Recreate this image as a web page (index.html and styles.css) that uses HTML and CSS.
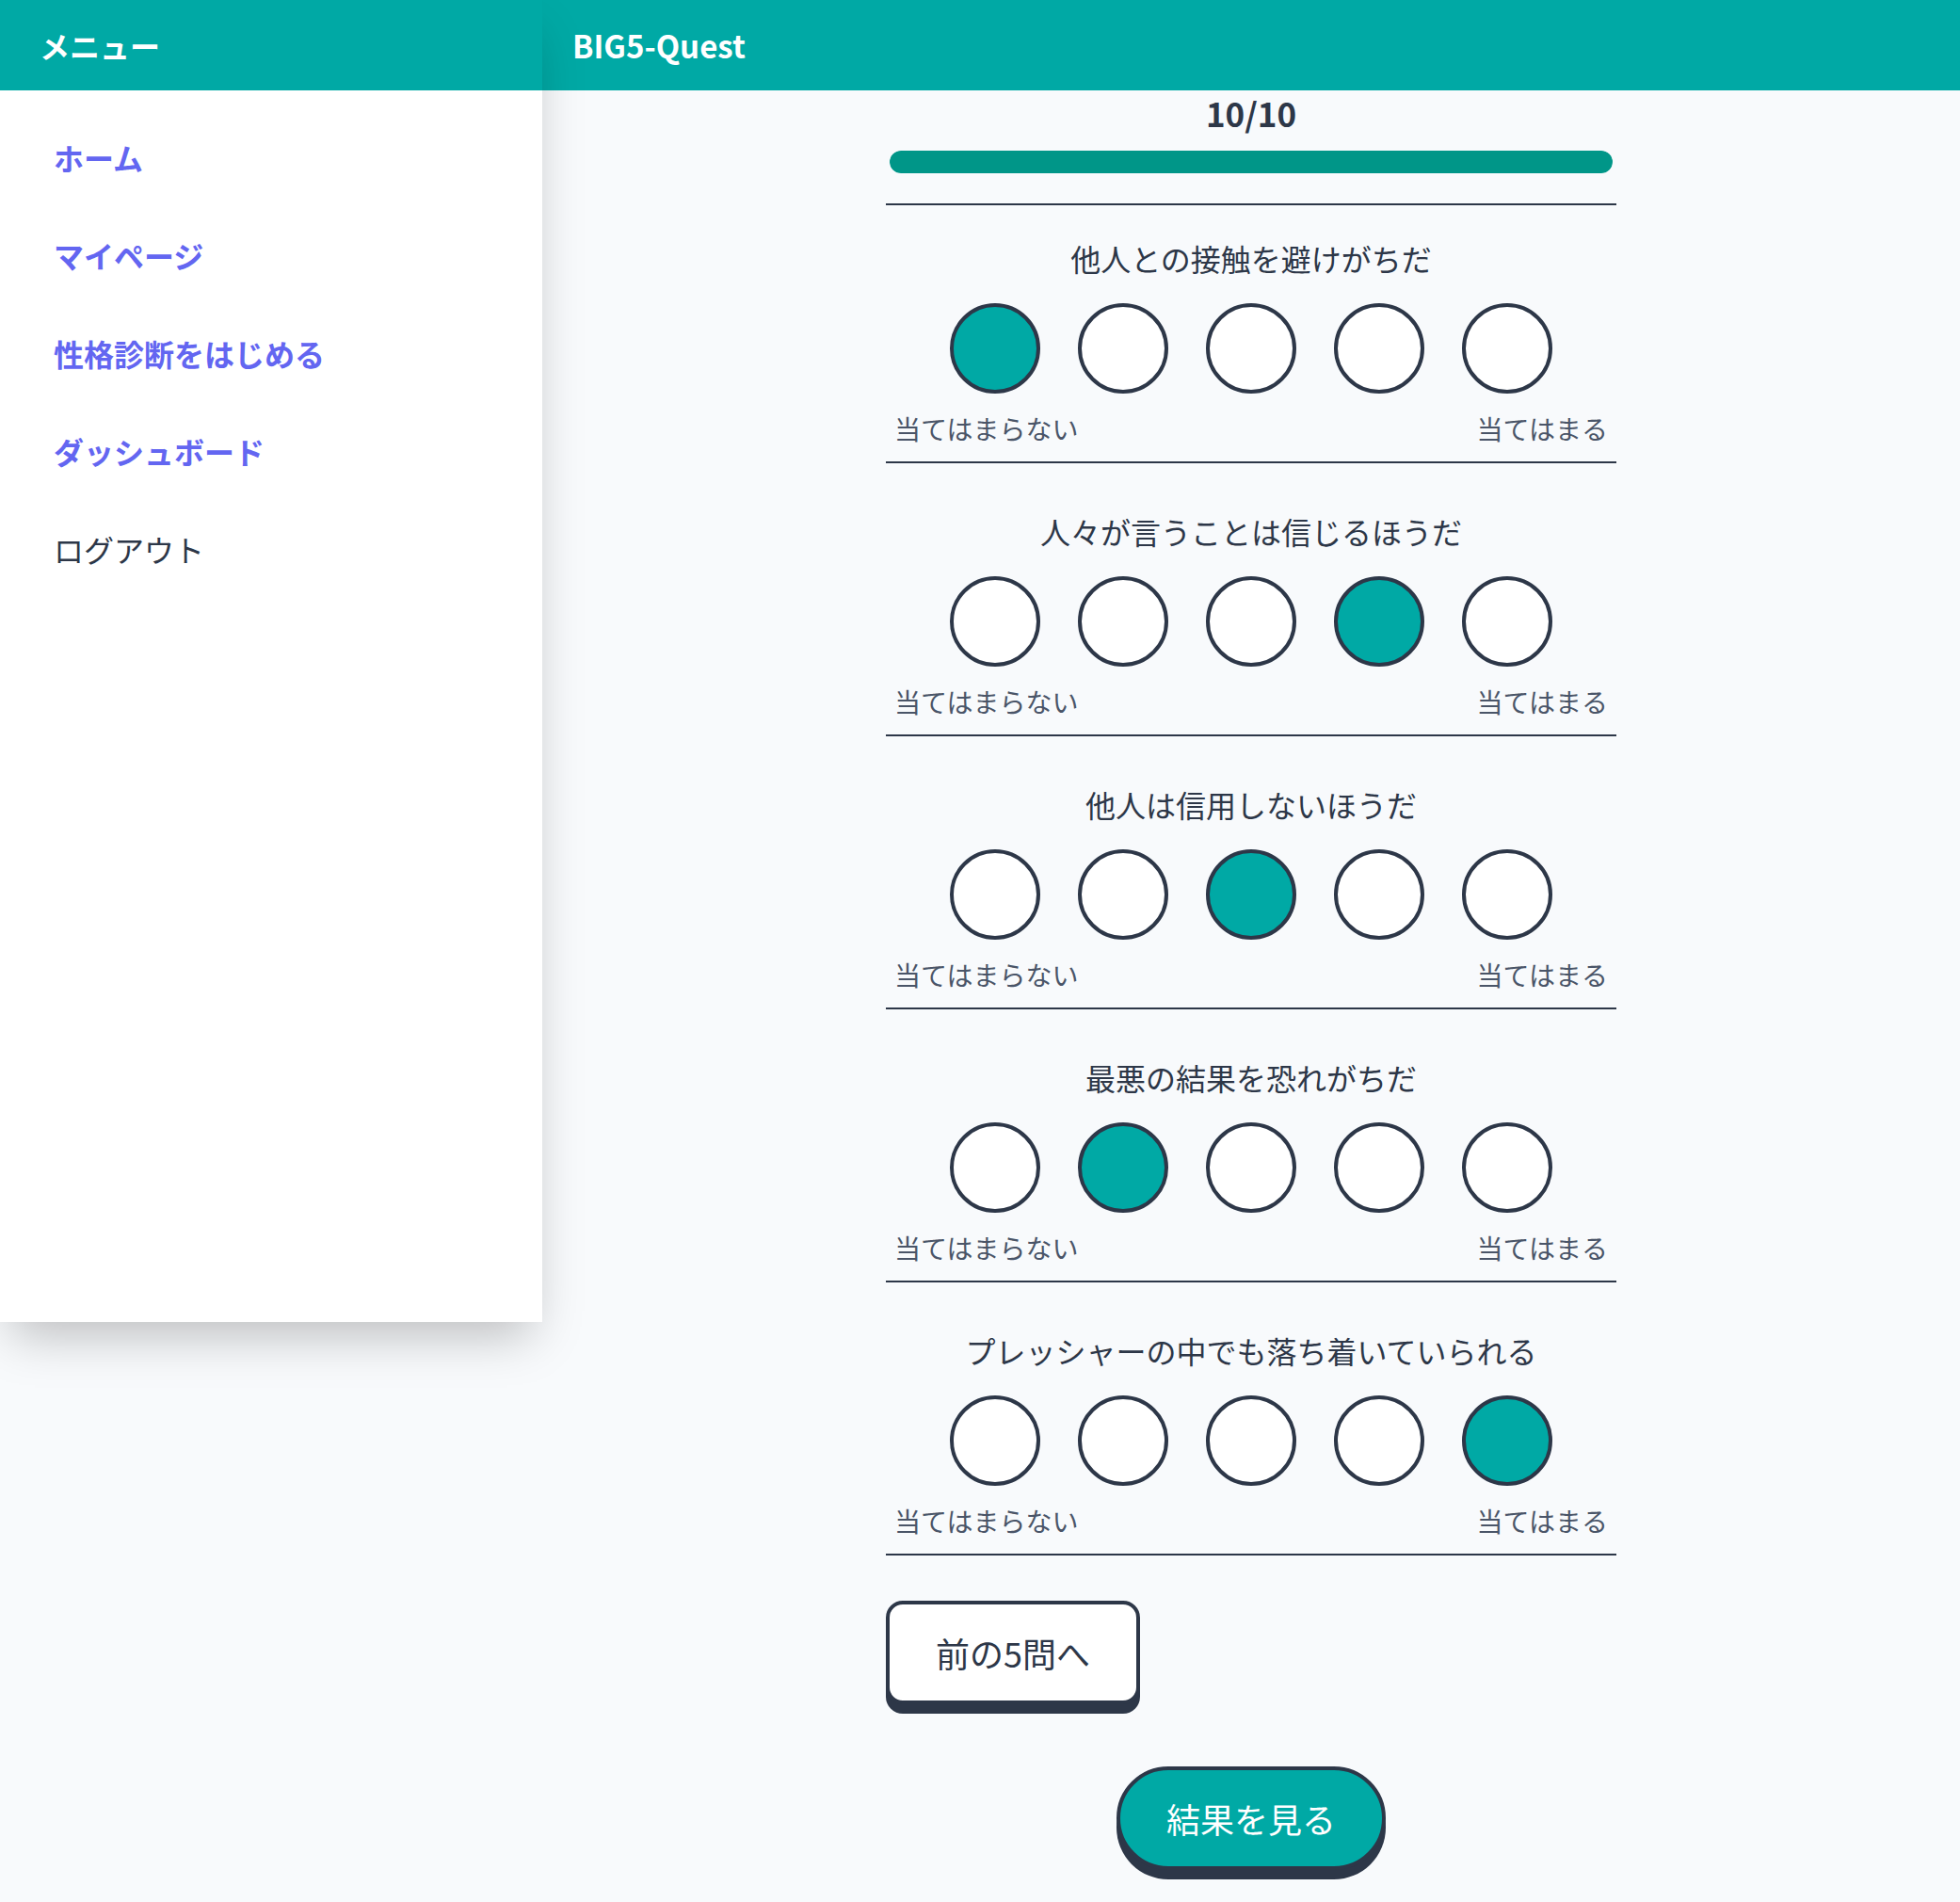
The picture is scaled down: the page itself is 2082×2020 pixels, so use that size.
FILE: index.html
```html
<!DOCTYPE html>
<html lang="ja">
<head>
<meta charset="utf-8">
<title>BIG5-Quest</title>
<link rel="stylesheet" href="styles.css">
</head>
<body>
<div class="app">
  <aside class="drawer">
    <div class="drawer-head">メニュー</div>
    <nav class="drawer-nav">
      <a class="nav-link" href="#">ホーム</a>
      <a class="nav-link" href="#">マイページ</a>
      <a class="nav-link" href="#">性格診断をはじめる</a>
      <a class="nav-link" href="#">ダッシュボード</a>
      <a class="nav-link nav-plain" href="#">ログアウト</a>
    </nav>
  </aside>
  <div class="main">
    <header class="topbar">BIG5-Quest</header>
    <main class="content">
      <div class="progress">
        <div class="progress-count">10/10</div>
        <div class="progress-track"><div class="progress-fill" style="width:100%"></div></div>
      </div>

      <div class="questions">
        <section class="question">
          <p class="q-text">他人との接触を避けがちだ</p>
          <div class="choices">
            <span class="choice selected"></span><span class="choice"></span><span class="choice"></span><span class="choice"></span><span class="choice"></span>
          </div>
          <div class="scale"><span>当てはまらない</span><span>当てはまる</span></div>
        </section>

        <section class="question">
          <p class="q-text">人々が言うことは信じるほうだ</p>
          <div class="choices">
            <span class="choice"></span><span class="choice"></span><span class="choice"></span><span class="choice selected"></span><span class="choice"></span>
          </div>
          <div class="scale"><span>当てはまらない</span><span>当てはまる</span></div>
        </section>

        <section class="question">
          <p class="q-text">他人は信用しないほうだ</p>
          <div class="choices">
            <span class="choice"></span><span class="choice"></span><span class="choice selected"></span><span class="choice"></span><span class="choice"></span>
          </div>
          <div class="scale"><span>当てはまらない</span><span>当てはまる</span></div>
        </section>

        <section class="question">
          <p class="q-text">最悪の結果を恐れがちだ</p>
          <div class="choices">
            <span class="choice"></span><span class="choice selected"></span><span class="choice"></span><span class="choice"></span><span class="choice"></span>
          </div>
          <div class="scale"><span>当てはまらない</span><span>当てはまる</span></div>
        </section>

        <section class="question">
          <p class="q-text">プレッシャーの中でも落ち着いていられる</p>
          <div class="choices">
            <span class="choice"></span><span class="choice"></span><span class="choice"></span><span class="choice"></span><span class="choice selected"></span>
          </div>
          <div class="scale"><span>当てはまらない</span><span>当てはまる</span></div>
        </section>
      </div>

      <div class="actions">
        <button class="btn btn-back" type="button">前の5問へ</button>
        <button class="btn btn-result" type="button">結果を見る</button>
      </div>
    </main>
  </div>
</div>
</body>
</html>
```

FILE: styles.css
```css
* { box-sizing: border-box; }

html, body {
  margin: 0;
  padding: 0;
}

body {
  background: #f8fafc;
  font-family: "Noto Sans CJK JP", "Noto Sans", sans-serif;
  color: #2d3748;
}

.app {
  display: flex;
  align-items: flex-start;
  min-height: 2020px;
}

.drawer {
  width: 576px;
  flex: 0 0 576px;
  height: 1404px;
  background: #ffffff;
  box-shadow: 0 25px 50px -12px rgba(0, 0, 0, 0.25);
  position: relative;
  z-index: 2;
}

.drawer-head {
  height: 96px;
  background: #00a9a5;
  color: #ffffff;
  font-size: 32px;
  font-weight: 700;
  line-height: 96px;
  padding-left: 42px;
}

.drawer-nav {
  display: flex;
  flex-direction: column;
  padding-top: 19px;
}

.nav-link {
  display: block;
  height: 104px;
  line-height: 104px;
  padding-left: 57px;
  font-size: 32px;
  font-weight: 700;
  color: #6366f1;
  text-decoration: none;
}

.nav-plain {
  color: #2d3748;
  font-weight: 400;
}

.main {
  flex: 1;
  display: flex;
  flex-direction: column;
}

.topbar {
  height: 96px;
  background: #00a9a5;
  color: #ffffff;
  font-size: 33px;
  font-weight: 700;
  line-height: 96px;
  padding-left: 32px;
}

.content {
  width: 776px;
  margin: 0 auto;
}

.progress {
  padding-bottom: 32px;
  border-bottom: 2px solid #2d3748;
}

.progress-count {
  text-align: center;
  font-size: 35px;
  font-weight: 700;
  line-height: 48px;
  color: #2d3748;
}

.progress-track {
  width: 768px;
  height: 24px;
  margin: 16px auto 0;
  border-radius: 12px;
  background: #b2dfdb;
  overflow: hidden;
}

.progress-fill {
  height: 100%;
  border-radius: 12px;
  background: #009688;
}

.question {
  padding: 48px 0 14px;
  border-bottom: 2px solid #2d3748;
}

.question:first-child {
  padding-top: 32px;
}

.q-text {
  margin: 0;
  text-align: center;
  font-size: 32px;
  line-height: 48px;
  color: #2d3748;
}

.choices {
  display: flex;
  justify-content: center;
  gap: 40px;
  margin-top: 24px;
}

.choice {
  width: 96px;
  height: 96px;
  border: 4px solid #2d3748;
  border-radius: 50%;
  background: #ffffff;
}

.choice.selected {
  background: #00a9a5;
}

.scale {
  display: flex;
  justify-content: space-between;
  margin-top: 16px;
  padding: 0 9px 0 9px;
  font-size: 28px;
  line-height: 42px;
  color: #4a5568;
}

.actions {
  display: flex;
  flex-direction: column;
  align-items: flex-start;
}

.btn {
  font-family: inherit;
  font-size: 36px;
  line-height: 54px;
  padding: 24px 49px;
  border: 4px solid #2d3748;
  box-shadow: 0 10px 0 #2d3748;
  cursor: pointer;
}

.btn-back {
  margin-top: 48px;
  background: #ffffff;
  color: #2d3748;
  border-radius: 18px;
}

.btn-result {
  align-self: center;
  margin-top: 66px;
  background: #00a9a5;
  color: #ffffff;
  border-radius: 9999px;
}
```
